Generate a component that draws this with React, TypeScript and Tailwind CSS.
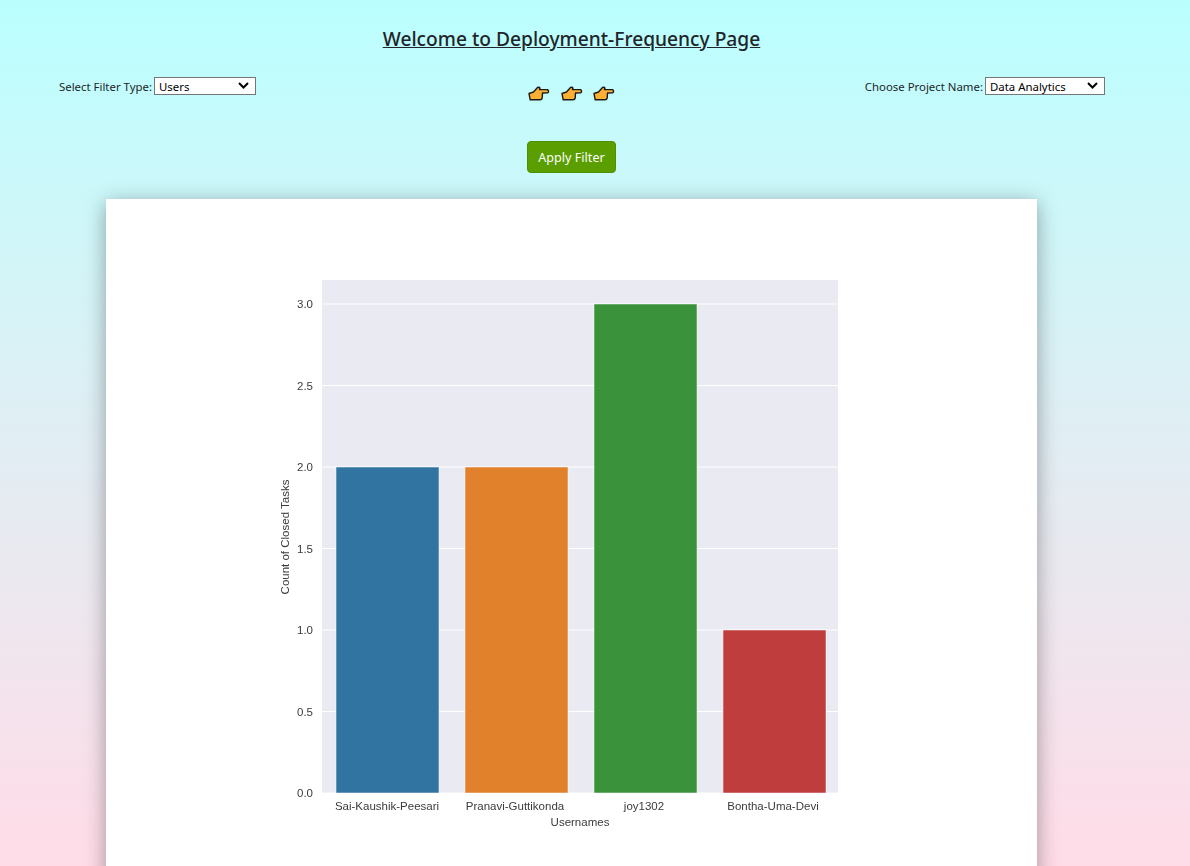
const bars = [
  { name: 'Sai-Kaushik-Peesari', x: 336, labelX: 387, value: 2, color: '#3274a1' },
  { name: 'Pranavi-Guttikonda', x: 465, labelX: 515, value: 2, color: '#e1812c' },
  { name: 'joy1302', x: 594, labelX: 644, value: 3, color: '#3a923a' },
  { name: 'Bontha-Uma-Devi', x: 723, labelX: 773, value: 1, color: '#c03d3e' },
]

const ticks = [0, 0.5, 1, 1.5, 2, 2.5, 3]

const yFor = (v: number) => 793 - v * 163

const Hand = () => (
  <svg width="22" height="15" viewBox="0 0 22 15">
    <path
      d="M1 7.5 L5.5 6 L9.5 1.5 Q11.5 0.8 12 2.2 L11.5 3.6 L19.5 3.6 Q21.5 5 19.8 6.8 L14.5 7 L14.2 12 Q13.8 13.8 12 13.8 L2.2 13.8 Z"
      fill="#fbb034"
      stroke="#1a1a1a"
      strokeWidth="1.4"
      strokeLinejoin="round"
    />
  </svg>
)

const Chevron = () => (
  <svg className="absolute right-[7px] top-[5px] pointer-events-none" width="11" height="7" viewBox="0 0 11 7">
    <path d="M1 1 L5.5 5.5 L10 1" fill="none" stroke="#000" strokeWidth="2" />
  </svg>
)

const Filter = ({ label, value, width, options }: { label: string; value: string; width: string; options: string[] }) => (
  <div className="flex items-start gap-[2px] text-[11.4px] leading-[20px] text-[#212529]">
    <label>{label}</label>
    <div className={`relative h-[18px] ${width}`}>
      <select
        defaultValue={value}
        className="block w-full h-full appearance-none bg-white border border-[#767676] pl-[4px] pt-[1px] text-[11.4px] leading-[16px] text-black"
      >
        {options.map((o) => (
          <option key={o}>{o}</option>
        ))}
      </select>
      <Chevron />
    </div>
  </div>
)

const Chart = () => (
  <svg
    className="block ml-[164px] mt-[71px] blur-[0.3px]"
    width="590"
    height="570"
    viewBox="270 270 590 570"
    fontFamily="'Liberation Sans', Arial, sans-serif"
    fontSize="11.5"
    fill="#3b3b3b"
  >
    <rect x="322" y="280" width="516" height="513" fill="#eaeaf2" />
    {ticks.map((t) => (
      <g key={t}>
        <line x1="322" x2="838" y1={yFor(t)} y2={yFor(t)} stroke="#fff" strokeWidth="1" />
        <text x="313" y={yFor(t) + 4} textAnchor="end">
          {t.toFixed(1)}
        </text>
      </g>
    ))}
    {bars.map((b) => (
      <g key={b.name}>
        <rect x={b.x} y={yFor(b.value)} width="103" height={793 - yFor(b.value)} fill={b.color} stroke="#fff" strokeWidth="0.5" />
        <text x={b.labelX} y="810" textAnchor="middle">
          {b.name}
        </text>
      </g>
    ))}
    <text x="580" y="826" textAnchor="middle">
      Usernames
    </text>
    <text transform="translate(289 537) rotate(-90)" textAnchor="middle">
      Count of Closed Tasks
    </text>
  </svg>
)

export default function App() {
  return (
    <div className="h-[866px] overflow-hidden bg-gradient-to-b from-[#baffff] to-[#ffdce8] font-['Noto_Sans','Open_Sans',sans-serif]">
      <div className="w-[1143px]">
        <h1 className="pt-[25px] text-center text-[19.2px] leading-[28px] font-medium underline text-[#212529]">
          Welcome to Deployment-Frequency Page
        </h1>
        <div className="grid grid-cols-[1fr_auto_1fr] items-start h-[20px] px-[38px] mt-[24px]">
          <div className="flex pl-[21px]">
            <Filter label="Select Filter Type:" value="Users" width="w-[102px]" options={['Users', 'Tasks']} />
          </div>
          <div className="flex gap-[10.5px] mt-[9px]">
            <Hand />
            <Hand />
            <Hand />
          </div>
          <div className="flex justify-end">
            <Filter label="Choose Project Name:" value="Data Analytics" width="w-[120px]" options={['Data Analytics', 'Web']} />
          </div>
        </div>
        <div className="flex justify-center mt-[44px]">
          <button className="w-[89px] h-[32px] pt-[2px] rounded-[4px] bg-[#5a9e00] border border-[#4f8f00] text-white text-[12.6px]">
            Apply Filter
          </button>
        </div>
        <div className="ml-[106px] w-[931px] h-[700px] mt-[26px] bg-white shadow-[0_4px_20px_rgba(0,0,0,0.35)] overflow-hidden">
          <Chart />
        </div>
      </div>
    </div>
  )
}
